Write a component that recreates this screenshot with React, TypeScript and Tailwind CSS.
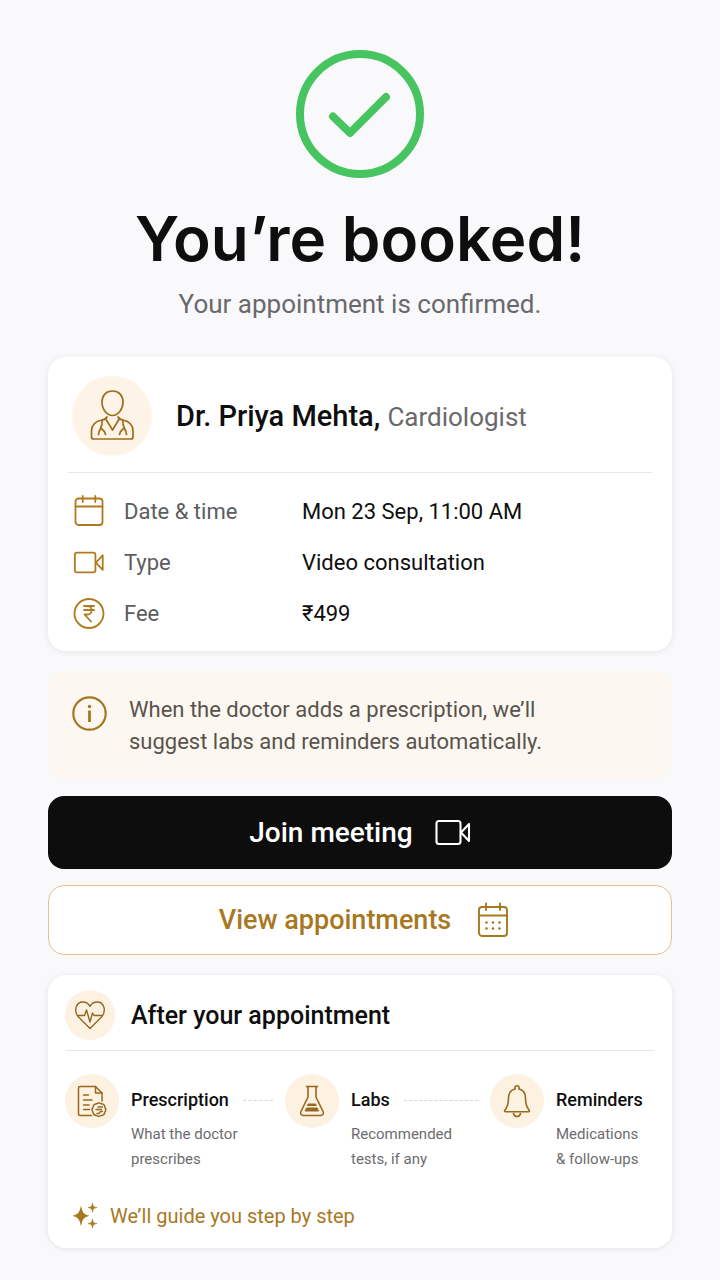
import type { ReactNode } from "react";

type IconProps = { className?: string };

const CheckCircleIcon = ({ className }: IconProps) => (
  <svg viewBox="0 0 128 128" fill="none" stroke="currentColor" strokeWidth="8" strokeLinecap="round" strokeLinejoin="round" className={className} aria-hidden="true">
    <circle cx="64" cy="64" r="60" />
    <path d="M37 66.500 54 83 90 47" />
  </svg>
);

const DoctorIcon = ({ className }: IconProps) => (
  <svg viewBox="0 0 48 54" fill="none" stroke="currentColor" strokeWidth="1.700" strokeLinecap="round" strokeLinejoin="round" className={className} aria-hidden="true">
    <path d="M24.500 2C18 2 14 6.500 14 13c0 7.500 5 13.500 10.500 13.500S35 20.500 35 13C35 6.500 31 2 24.500 2Z" />
    <path d="M19 28c-1 2-2.500 2.500-5 3C6.500 32.500 3.500 36.500 3.500 42v6c0 1.200.7 2 2 2h37.500c1.300 0 2-.8 2-2v-6c0-6-3-9.500-10-11-2.500-.5-4-1-5-3" />
    <path d="M17.500 29.500 24.500 41 31.500 29.500" />
    <path d="M14 31.500c.5 3.500 0 5.500-1.500 8-1.200 2-2 4-2 6M13.500 39.500c2 1.500 3.500 4 4 6M35 31.500c-.5 3.500 0 5.500 1.500 8 1.200 2 2 4 2 6M35.500 39.500c-2 1.500-3.500 4-4 6" />
  </svg>
);

const CalendarIcon = ({ className }: IconProps) => (
  <svg viewBox="0 0 32 34" fill="none" stroke="currentColor" strokeWidth="1.800" strokeLinecap="round" strokeLinejoin="round" className={className} aria-hidden="true">
    <rect x="2.500" y="3.500" width="27" height="26.500" rx="3" />
    <path d="M2.500 11.500h27M9.700 1v6M22.300 1v6" />
  </svg>
);

const CalendarDotsIcon = ({ className }: IconProps) => (
  <svg viewBox="0 0 32 36" fill="none" stroke="currentColor" strokeWidth="1.900" strokeLinecap="round" strokeLinejoin="round" className={className} aria-hidden="true">
    <rect x="2" y="5" width="28" height="29" rx="3" />
    <path d="M2 13.500h28M9 1.500V8M23 1.500V8" />
    <path strokeWidth="2.700" d="M9.500 20.500h.01M16 20.500h.01M22.500 20.500h.01M9.500 26.500h.01M16 26.500h.01M22.500 26.500h.01" />
  </svg>
);

const VideoIcon = ({ className }: IconProps) => (
  <svg viewBox="0 0 36 28" fill="none" stroke="currentColor" strokeWidth="2.100" strokeLinecap="round" strokeLinejoin="round" className={className} aria-hidden="true">
    <rect x="1.500" y="2" width="24" height="23" rx="2.500" />
    <path d="M26 13.500 34 5v17Z" />
  </svg>
);

const RupeeIcon = ({ className }: IconProps) => (
  <svg viewBox="0 0 32 32" fill="none" stroke="currentColor" strokeWidth="1.800" strokeLinecap="round" strokeLinejoin="round" className={className} aria-hidden="true">
    <circle cx="16" cy="15.500" r="14.500" />
    <path d="M11 8h10M11 12h10M11 8h3.500c5.500 0 5.500 8.500 0 8.500H11.500L18 23.500" />
  </svg>
);

const InfoIcon = ({ className }: IconProps) => (
  <svg viewBox="0 0 36 36" fill="none" stroke="currentColor" className={className} aria-hidden="true">
    <circle cx="17.500" cy="17.500" r="16.200" strokeWidth="2.200" />
    <path d="M17.500 14.500V26" strokeWidth="2.800" />
    <circle cx="17.500" cy="10.500" r="1.700" fill="currentColor" stroke="none" />
  </svg>
);

const HeartPulseIcon = ({ className }: IconProps) => (
  <svg viewBox="0 0 32 30" fill="none" stroke="currentColor" strokeWidth="1.400" strokeLinecap="round" strokeLinejoin="round" className={className} aria-hidden="true">
    <path d="M16 28.500 4.500 17C-.5 11.500 1.500 2 9 2c3 0 5.500 1.500 7 4.500C17.500 3.500 20 2 23 2c7.500 0 9.500 9.500 4.500 15Z" />
    <path d="M3.500 15.500h7l2-5.500 3.500 12 2.500-9 1.500 2.500h8.500" />
  </svg>
);

const PrescriptionIcon = ({ className }: IconProps) => (
  <svg viewBox="0 0 32 34" fill="none" stroke="currentColor" strokeWidth="1.500" strokeLinecap="round" strokeLinejoin="round" className={className} aria-hidden="true">
    <path d="M15.500 31.500H4a1.500 1.500 0 0 1-1.500-1.500V4A1.500 1.500 0 0 1 4 2.500h15.500L26 9v8" />
    <path d="M19.500 2.500V9H26" />
    <path d="M7.500 11h5M7.500 16h8.500M7.500 21h5.500M7.500 25.500h6" />
    <path d="M20.500 19.800c1.500-1 3.500-1 5 0 2 .2 3.300 1.700 3.300 3.500 1.200 1.500 1.200 3.500 0 5-.3 2-1.800 3.200-3.600 3.200-1.500 1-3.200 1-4.700 0-2-.1-3.300-1.400-3.500-3.200-1.200-1.500-1.200-3.500 0-5 .2-2 1.600-3.300 3.500-3.500Z" strokeWidth="1.400" />
    <path d="M26.500 23h-4.500M20 25.500h5.500M26.500 27.500h-2l-1.500 2h-2" strokeWidth="1.300" />
  </svg>
);

const FlaskIcon = ({ className }: IconProps) => (
  <svg viewBox="0 0 28 34" fill="none" stroke="currentColor" strokeWidth="1.600" strokeLinecap="round" strokeLinejoin="round" className={className} aria-hidden="true">
    <path d="M8.500 2.500h11M10 2.500v10.500L3 27.500c-1 2.500 0 4 2.500 4h17c2.500 0 3.500-1.500 2.500-4L18 13V2.500" />
    <path d="M10.500 20h7l.8 1.500h-8.600ZM8.800 24h10.400l1.300 3h-13Z" fill="currentColor" strokeWidth="1" />
  </svg>
);

const BellIcon = ({ className }: IconProps) => (
  <svg viewBox="0 0 30 34" fill="none" stroke="currentColor" strokeWidth="1.600" strokeLinecap="round" strokeLinejoin="round" className={className} aria-hidden="true">
    <path d="M13 5V3.800a2 2 0 0 1 4 0V5c4 1 6.500 4.500 6.500 9 0 6.500 1 9 3.500 12 .8 1 .3 1.800-.5 1.800h-23c-.8 0-1.300-.8-.5-1.800 2.500-3 3.500-5.500 3.500-12 0-4.500 2.500-8 6.500-9Z" />
    <path d="M11.500 29.500c.5 2 1.800 3 3.500 3s3-1 3.500-3" />
  </svg>
);

const SparklesIcon = ({ className }: IconProps) => (
  <svg viewBox="0 0 26 26" fill="currentColor" className={className} aria-hidden="true">
    <path d="M9 2.500c1.500 7 2.500 8.700 8.500 10.300C11.500 14.500 10.500 16 9 23.500 7.500 16 6.500 14.500.3 12.800 6.500 11.200 7.500 9.500 9 2.500Z" />
    <path d="M20.500 0c.5 3.400 1.100 4.100 4.500 4.600-3.400.5-4 1.200-4.500 4.600-.5-3.400-1.100-4.100-4.500-4.600 3.400-.5 4-1.200 4.500-4.600Z" stroke="currentColor" strokeWidth=".6" />
    <path d="M20.500 16c.5 3.400 1.100 4.100 4.500 4.600-3.400.5-4 1.200-4.500 4.600-.5-3.400-1.100-4.100-4.500-4.600 3.400-.5 4-1.200 4.500-4.600Z" stroke="currentColor" strokeWidth=".6" />
  </svg>
);

const details = [
  { label: "Date & time", value: "Mon 23 Sep, 11:00 AM", icon: <CalendarIcon className="h-[34px] w-8" /> },
  { label: "Type", value: "Video consultation", icon: <VideoIcon className="h-6 w-8" /> },
  { label: "Fee", value: "₹499", icon: <RupeeIcon className="size-8" /> },
];

const steps = [
  { title: "Prescription", lines: ["What the doctor", "prescribes"], icon: <PrescriptionIcon className="h-[34px] w-8" /> },
  { title: "Labs", lines: ["Recommended", "tests, if any"], icon: <FlaskIcon className="h-[34px] w-7" /> },
  { title: "Reminders", lines: ["Medications", "& follow-ups"], icon: <BellIcon className="h-[34px] w-[30px]" /> },
];

const Card = ({ className, children }: { className: string; children: ReactNode }) => (
  <section className={`rounded-[18px] bg-white shadow-[0_1px_6px_rgba(20,20,40,0.09)] ${className}`}>{children}</section>
);

const App = () => {
  return (
    <main className="min-h-screen bg-[#f9f9fb] px-12 pt-[50px] pb-8 font-[Roboto,sans-serif] text-[#0e0e0f]">
      <header className="flex flex-col items-center text-center">
        <CheckCircleIcon className="size-32 text-[#45c45f]" />
        <h1 className="mt-6 font-[Inter,sans-serif] text-[62px] leading-[74px] font-semibold">You’re booked!</h1>
        <p className="mt-3 text-[26px] leading-8 text-[#69696c]">Your appointment is confirmed.</p>
      </header>

      <Card className="mt-[37px] px-5 pt-[19px] pb-3">
        <div className="flex items-center gap-6 border-b border-[#e6e6e8] px-1 pb-4">
          <div className="flex size-20 shrink-0 items-center justify-center rounded-full bg-[#fdf3e6] text-[#9c6f1d]">
            <DoctorIcon className="h-[54px] w-12" />
          </div>
          <h2 className="text-[29px] leading-8 font-medium">
            Dr. Priya Mehta, <span className="text-[26px] font-normal text-[#69696c]">Cardiologist</span>
          </h2>
        </div>
        <dl className="pt-[13px]">
          {details.map((item) => (
            <div key={item.label} className="flex h-[51px] items-center px-[5px] text-[22px] leading-8">
              <dt className="flex w-[229px] items-center gap-[19px] text-[#5c5c5f]">
                <span className="flex w-8 justify-center text-[#b07a1e]">{item.icon}</span>
                {item.label}
              </dt>
              <dd>{item.value}</dd>
            </div>
          ))}
        </dl>
      </Card>

      <section className="mt-5 flex gap-[21px] rounded-2xl bg-[#fcf7f0] px-6 pt-[23px] pb-5">
        <InfoIcon className="mt-0.5 size-9 shrink-0 text-[#a4771f]" />
        <p className="text-[22px] leading-8 text-[#58534d]">
          When the doctor adds a prescription, we’ll
          <br />
          suggest labs and reminders automatically.
        </p>
      </section>

      <button className="mt-[18px] flex h-[73px] w-full items-center justify-center gap-[22px] rounded-2xl bg-[#0d0d0d] text-[28px] leading-8 font-medium text-white">
        Join meeting
        <VideoIcon className="h-7 w-9" />
      </button>
      <button className="mt-4 flex h-[70px] w-full items-center justify-center gap-[26px] rounded-2xl border border-[#e0c493] bg-white pl-2 text-[27px] leading-8 font-medium text-[#a8781f]">
        View appointments
        <CalendarDotsIcon className="h-9 w-8" />
      </button>

      <Card className="mt-5 px-[17px] pt-[15px] pb-4">
        <div className="flex items-center gap-4 border-b border-[#e6e6e8] pb-2.5">
          <div className="flex size-[50px] shrink-0 items-center justify-center rounded-full bg-[#fdf1e2] text-[#8f6723]">
            <HeartPulseIcon className="h-[30px] w-8" />
          </div>
          <h2 className="pt-0.5 text-[25px] leading-8 font-medium">After your appointment</h2>
        </div>

        <ol className="grid grid-cols-[220fr_205fr_165fr] pt-[23px]">
          {steps.map((step, i) => (
            <li key={step.title} className="flex gap-3">
              <div className="flex size-[54px] shrink-0 items-center justify-center rounded-full bg-[#fdf1e2] text-[#96691c]">
                {step.icon}
              </div>
              <div className="flex-1 pt-3">
                <div className="flex items-center gap-3.5">
                  <h3 className="text-lg leading-7 font-medium">{step.title}</h3>
                  {i < steps.length - 1 && <span className="mr-3 flex-1 border-t border-dashed border-[#d6d6d8]" />}
                </div>
                <p className="mt-2 text-[15px] leading-[25px] whitespace-nowrap text-[#6c6c6f]">
                  {step.lines[0]}
                  <br />
                  {step.lines[1]}
                </p>
              </div>
            </li>
          ))}
        </ol>

        <p className="mt-7 flex items-center gap-3 px-[7px] text-xl leading-8 text-[#a8781f]">
          <SparklesIcon className="size-[26px]" />
          We’ll guide you step by step
        </p>
      </Card>
    </main>
  );
};

export default App;
